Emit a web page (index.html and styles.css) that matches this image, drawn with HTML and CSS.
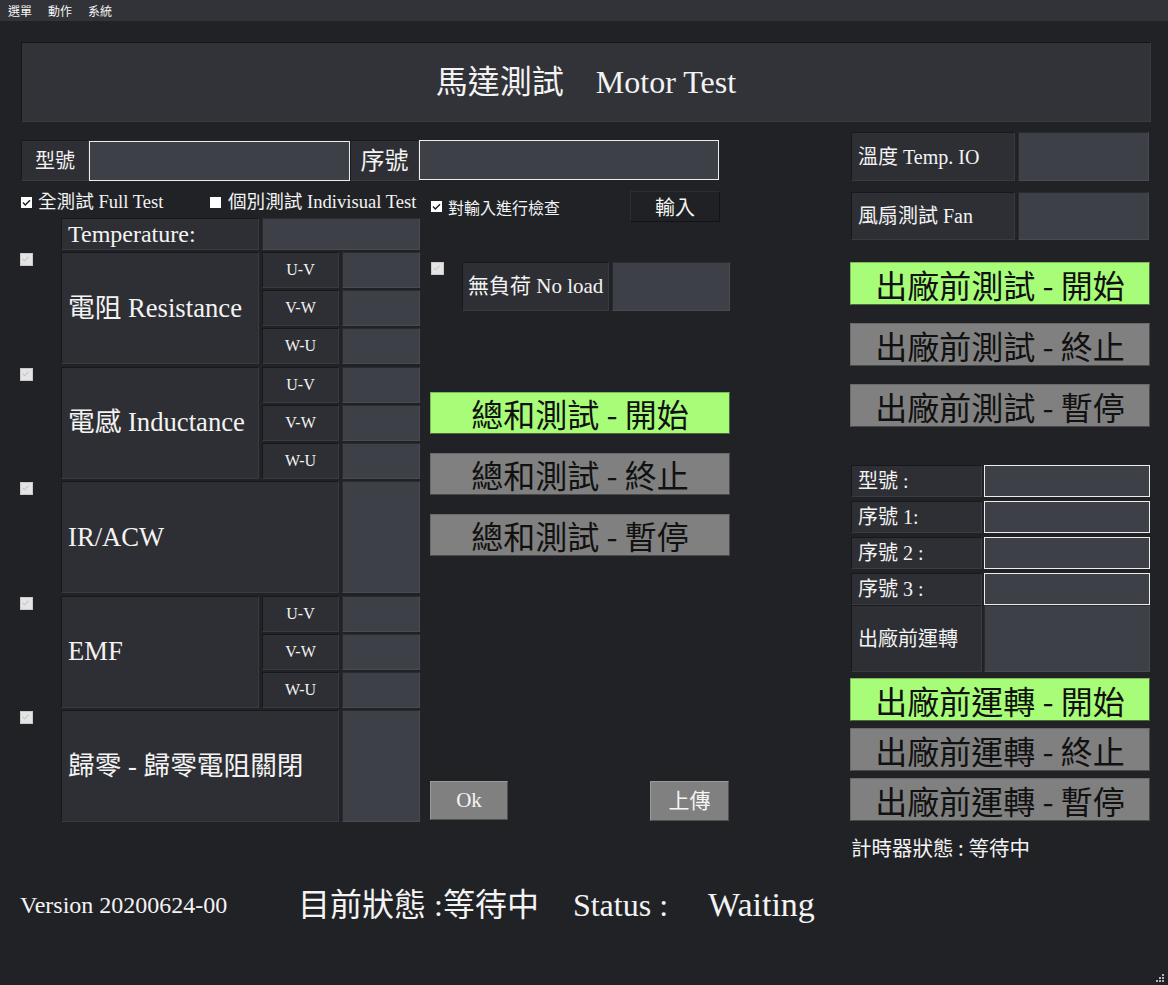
FILE: index.html
```html
<!DOCTYPE html>
<html lang="zh-Hant">
<head>
<meta charset="utf-8">
<title>Motor Test</title>
<link rel="stylesheet" href="styles.css">
</head>
<body>
<div class="menubar"><span>選單</span><span>動作</span><span>系統</span></div>

<div class="title">馬達測試　Motor Test</div>

<div class="content">
  <div class="leftmid">
    <div class="idrow">
      <div class="box lbl-a">型號</div>
      <div class="input in-a"></div>
      <div class="box lbl-b">序號</div>
      <div class="input in-b"></div>
    </div>
    <div class="cols">
      <div class="left">
        <div class="checkrow">
          <label class="chk w1"><span class="cb on"><svg viewBox="0 0 11 11"><path d="M2 5.6 L4.3 7.9 L9 3.2"/></svg></span>全測試 Full Test</label>
          <label class="chk"><span class="cb"></span>個別測試 Indivisual Test</label>
        </div>
        <div class="temprow">
          <div class="box tl">Temperature:</div>
          <div class="val tv"></div>
        </div>
        <div class="blocks">
          <div class="blk">
            <div class="cbcol"><span class="cbd"><svg viewBox="0 0 13 13"><path d="M3 6.8 L5.3 9 L10 4.2"/></svg></span></div>
            <div class="box bl">電阻 Resistance</div>
            <div class="subs">
              <div class="box sl">U-V</div><div class="val"></div>
              <div class="box sl">V-W</div><div class="val"></div>
              <div class="box sl">W-U</div><div class="val"></div>
            </div>
          </div>
          <div class="blk">
            <div class="cbcol"><span class="cbd"><svg viewBox="0 0 13 13"><path d="M3 6.8 L5.3 9 L10 4.2"/></svg></span></div>
            <div class="box bl">電感 Inductance</div>
            <div class="subs">
              <div class="box sl">U-V</div><div class="val"></div>
              <div class="box sl">V-W</div><div class="val"></div>
              <div class="box sl">W-U</div><div class="val"></div>
            </div>
          </div>
          <div class="blk">
            <div class="cbcol"><span class="cbd"><svg viewBox="0 0 13 13"><path d="M3 6.8 L5.3 9 L10 4.2"/></svg></span></div>
            <div class="box bl wide">IR/ACW</div>
            <div class="val tall"></div>
          </div>
          <div class="blk">
            <div class="cbcol"><span class="cbd"><svg viewBox="0 0 13 13"><path d="M3 6.8 L5.3 9 L10 4.2"/></svg></span></div>
            <div class="box bl">EMF</div>
            <div class="subs">
              <div class="box sl">U-V</div><div class="val"></div>
              <div class="box sl">V-W</div><div class="val"></div>
              <div class="box sl">W-U</div><div class="val"></div>
            </div>
          </div>
          <div class="blk">
            <div class="cbcol"><span class="cbd"><svg viewBox="0 0 13 13"><path d="M3 6.8 L5.3 9 L10 4.2"/></svg></span></div>
            <div class="box bl wide">歸零 - 歸零電阻關閉</div>
            <div class="val tall"></div>
          </div>
        </div>
      </div>

      <div class="mid">
        <div class="checkrow2">
          <label class="chk sans"><span class="cb on"><svg viewBox="0 0 11 11"><path d="M2 5.6 L4.3 7.9 L9 3.2"/></svg></span>對輸入進行檢查</label>
          <div class="darkbtn">輸入</div>
        </div>
        <div class="noload">
          <span class="cbd"><svg viewBox="0 0 13 13"><path d="M3 6.8 L5.3 9 L10 4.2"/></svg></span>
          <div class="box nl">無負荷 No load</div>
          <div class="val nv"></div>
        </div>
        <div class="bigbtns">
          <div class="btn green">總和測試 - 開始</div>
          <div class="btn gray">總和測試 - 終止</div>
          <div class="btn gray">總和測試 - 暫停</div>
        </div>
        <div class="okrow">
          <div class="smallbtn ok">Ok</div>
          <div class="smallbtn up">上傳</div>
        </div>
      </div>
    </div>
  </div>

  <div class="right">
    <div class="rrow">
      <div class="box rl">溫度 Temp. IO</div>
      <div class="val rv"></div>
    </div>
    <div class="rrow fan">
      <div class="box rl">風扇測試 Fan</div>
      <div class="val rv"></div>
    </div>
    <div class="tbtns">
      <div class="btn green">出廠前測試 - 開始</div>
      <div class="btn gray">出廠前測試 - 終止</div>
      <div class="btn gray">出廠前測試 - 暫停</div>
    </div>
    <div class="form">
      <div class="box fl">型號 :</div><div class="input fi"></div>
      <div class="box fl">序號 1:</div><div class="input fi"></div>
      <div class="box fl">序號 2 :</div><div class="input fi"></div>
      <div class="box fl">序號 3 :</div><div class="input fi"></div>
      <div class="box fl run">出廠前運轉</div><div class="val run"></div>
    </div>
    <div class="rbtns">
      <div class="btn green">出廠前運轉 - 開始</div>
      <div class="btn gray">出廠前運轉 - 終止</div>
      <div class="btn gray">出廠前運轉 - 暫停</div>
    </div>
    <div class="timer">計時器狀態 : 等待中</div>
  </div>
</div>

<div class="footer">
  <div class="version">Version 20200624-00</div>
  <div class="status"><span>目前狀態 :等待中</span><span class="st">Status :</span><span class="wt">Waiting</span></div>
</div>

<svg class="grip" viewBox="0 0 9 9" width="9" height="9">
  <rect x="6" y="0" width="2" height="2"/>
  <rect x="3" y="3" width="2" height="2"/><rect x="6" y="3" width="2" height="2"/>
  <rect x="0" y="6" width="2" height="2"/><rect x="3" y="6" width="2" height="2"/><rect x="6" y="6" width="2" height="2"/>
</svg>
</body>
</html>
```

FILE: styles.css
```css
* { box-sizing: border-box; }

html, body {
  margin: 0;
  padding: 0;
}

body {
  width: 1168px;
  height: 985px;
  overflow: hidden;
  position: relative;
  background: #212226;
  color: #f3f3f3;
  font-family: "Liberation Serif", "Noto Sans CJK TC", serif;
}

.menubar {
  height: 21px;
  background: #323338;
  display: flex;
  align-items: center;
  gap: 16px;
  padding-left: 8px;
  font: 12px/1 "Noto Sans CJK TC", sans-serif;
  color: #f5f5f5;
}

.title {
  margin: 21px 0 0 21px;
  width: 1130px;
  height: 80px;
  background: #323338;
  border: 1px solid;
  border-color: #15161a #393a3f #393a3f #15161a;
  display: flex;
  align-items: center;
  justify-content: center;
  font-size: 32px;
  line-height: 1;
}

.content {
  display: flex;
  height: 758px;
  padding-left: 20px;
}

.leftmid {
  width: 710px;
  margin-top: 18px;
}

/* generic boxes */
.box {
  background: #2e2f34;
  border: 1px solid;
  border-color: #17181b #3a3b40 #3a3b40 #17181b;
  display: flex;
  align-items: center;
  line-height: 1;
  white-space: nowrap;
}

.val {
  background: #3e4047;
  border: 1px solid;
  border-color: #2a2b30 #4a4b52 #4a4b52 #2a2b30;
}

.input {
  background: #3e4047;
  border: 1px solid #ececec;
}

/* ID row */
.idrow {
  display: flex;
  height: 41px;
}
.lbl-a {
  margin-left: 1px;
  width: 68px;
  justify-content: center;
  font-size: 20px;
}
.in-a { width: 261px; height: 40px; margin-top: 1px; }
.lbl-b {
  width: 69px;
  justify-content: center;
  font-size: 24px;
}
.in-b { width: 300px; height: 40px; }

.cols {
  display: flex;
  gap: 10px;
}

.left { width: 400px; }

.checkrow {
  height: 37px;
  display: flex;
  align-items: center;
  padding-top: 5px;
  font-size: 18.6px;
  line-height: 1;
}

.chk {
  display: flex;
  align-items: center;
  gap: 7px;
  white-space: nowrap;
}
.chk.w1 { width: 189px; margin-left: 1px; gap: 6px; }
.chk.sans {
  font: 16px/1 "Noto Sans CJK TC", sans-serif;
  margin-left: 1px;
  gap: 6px;
}

.cb {
  width: 11px;
  height: 11px;
  background: #ffffff;
  display: inline-block;
  flex: none;
}
.cb svg { display: block; width: 11px; height: 11px; }
.cb svg path { fill: none; stroke: #1b1b1b; stroke-width: 1.4; }

.cbd {
  width: 13px;
  height: 13px;
  background: #e4e4e4;
  border: 1px solid #c9c9c9;
  display: inline-block;
  flex: none;
}
.cbd svg { display: block; width: 11px; height: 11px; margin: 0; }
.cbd svg path { fill: none; stroke: #b2b2b2; stroke-width: 1.1; transform: translate(-1px, -1px); }

.temprow {
  display: flex;
  margin-left: 41px;
  height: 32px;
  gap: 3px;
}
.tl { width: 198px; padding-left: 6px; font-size: 24px; }
.tv { width: 158px; }

.blocks {
  margin-top: 2px;
  display: flex;
  flex-direction: column;
  gap: 2.5px;
}
.blk {
  display: flex;
  height: 112px;
}
.cbcol { width: 41px; }
.bl {
  width: 198px;
  padding-left: 6px;
  font-size: 26.67px;
}
.bl.wide { width: 278px; }
.subs {
  margin-left: 3px;
  display: grid;
  grid-template-columns: 77px 78px;
  grid-template-rows: repeat(3, 36px);
  gap: 2px 3px;
}
.sl {
  justify-content: center;
  font-size: 16px;
}
.val.tall {
  width: 78px;
  margin-left: 3px;
}

/* middle column */
.mid { width: 300px; }

.checkrow2 {
  margin-top: 10px;
  height: 31px;
  display: flex;
  align-items: center;
}
.darkbtn {
  margin-left: auto;
  margin-right: 10px;
  width: 90px;
  height: 31px;
  background: #202125;
  border: 1px solid;
  border-color: #2c2d31 #121316 #121316 #2c2d31;
  display: flex;
  align-items: center;
  justify-content: center;
  font: 20px/1 "Noto Sans CJK TC", sans-serif;
  color: #f5f5f5;
}

.noload {
  margin-top: 40px;
  display: flex;
  height: 49px;
  align-items: flex-start;
}
.noload .cbd { margin-left: 1px; }
.nl {
  margin-left: 18px;
  width: 147px;
  height: 49px;
  padding-left: 5px;
  font-size: 21px;
}
.nv {
  margin-left: 3px;
  width: 118px;
  height: 49px;
}

.btn {
  display: flex;
  align-items: center;
  justify-content: center;
  font: 32px/1 "Noto Sans CJK TC", sans-serif;
  color: #111111;
  border: 1px solid;
  white-space: nowrap;
}
.btn.green {
  background: #a7fd78;
  border-color: #7dbb5a #4a6a3a #4a6a3a #7dbb5a;
}
.btn.gray {
  background: #808080;
  border-color: #6a6a6a #4a4a4a #4a4a4a #6a6a6a;
}

.bigbtns {
  margin-top: 81px;
  display: flex;
  flex-direction: column;
  gap: 19px;
}
.bigbtns .btn { height: 42px; }

.okrow {
  margin-top: 225px;
  display: flex;
  justify-content: space-between;
  height: 40px;
}
.smallbtn {
  background: #808080;
  border: 1px solid;
  border-color: #9a9a9a #505050 #505050 #9a9a9a;
  display: flex;
  align-items: center;
  justify-content: center;
  font-size: 21px;
  line-height: 1;
  color: #f5f5f5;
}
.smallbtn.ok { width: 78px; height: 39px; }
.smallbtn.up { width: 79px; height: 40px; margin-right: 1px; }

/* right column */
.right {
  width: 300px;
  margin-left: 120px;
  margin-top: 10px;
}
.rrow {
  display: flex;
  height: 49px;
  gap: 3px;
  margin-left: 1px;
}
.rrow.fan {
  margin-top: 11px;
  height: 48px;
}
.rl {
  width: 164px;
  padding-left: 6px;
  font-size: 20px;
}
.rv { width: 131px; }

.tbtns {
  margin-top: 22px;
  display: flex;
  flex-direction: column;
  gap: 18px;
}
.tbtns .btn { height: 43px; }

.form {
  margin-top: 38px;
  margin-left: 1px;
  display: grid;
  grid-template-columns: 131px 166px;
  grid-template-rows: 32px 32px 32px 32px 63px;
  column-gap: 2px;
  row-gap: 4px;
}
.fl {
  padding-left: 6px;
  font-size: 20px;
}
.form .run { margin-top: -4px; }

.rbtns {
  margin-top: 6px;
  display: flex;
  flex-direction: column;
  gap: 7px;
}
.rbtns .btn { height: 43px; }

.timer {
  margin-top: 13px;
  margin-left: 1px;
  font: 20.5px/26px "Noto Sans CJK TC", sans-serif;
  color: #f3f3f3;
}

/* footer */
.footer {
  display: flex;
  align-items: center;
  height: 50px;
  padding-left: 20px;
  line-height: 1;
  white-space: nowrap;
}
.version {
  width: 278px;
  font-size: 24px;
}
.status {
  font-size: 32px;
  display: flex;
  align-items: baseline;
}
.status .st { margin-left: 34px; }
.status .wt { margin-left: 40px; font-size: 34px; }

.grip {
  position: absolute;
  right: 3px;
  bottom: 2px;
}
.grip rect { fill: #b4b4b4; }
```
